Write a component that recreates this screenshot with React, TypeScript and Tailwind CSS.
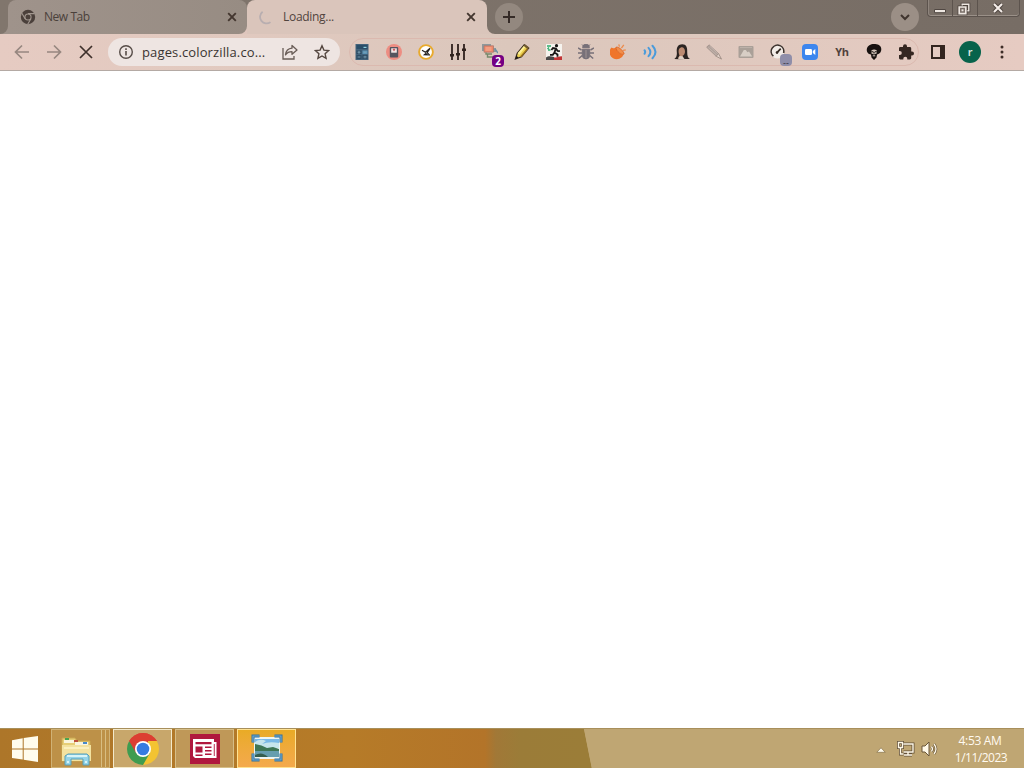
import type { ReactNode } from "react";

const uiFont = "font-['Open_Sans','Noto_Sans',sans-serif]";

type CellProps = { children: ReactNode };

const Cell = ({ children }: CellProps) => (
  <span className="relative flex h-8 w-8 shrink-0 items-center justify-center">
    {children}
  </span>
);

const CloseIcon = () => (
  <svg viewBox="0 0 10 10" className="h-2.5 w-2.5">
    <path d="M1.2 1.2l7.6 7.6M8.8 1.2L1.2 8.8" stroke="#43362f" strokeWidth="1.9" />
  </svg>
);

const Flare = ({ side, color }: { side: "left" | "right"; color: string }) => (
  <svg
    viewBox="0 0 8 8"
    className={`absolute bottom-0 h-2 w-2 ${side === "left" ? "-left-2" : "-right-2"}`}
  >
    <path d={side === "left" ? "M8 0v8H0A8 8 0 0 0 8 0z" : "M0 0v8h8A8 8 0 0 1 0 0z"} fill={color} />
  </svg>
);

const TabStrip = () => (
  <div className="relative flex h-[34px] bg-gradient-to-r from-[#81766d] to-[#776d65] pl-2">
    <div className="relative flex h-[34px] w-[239px] items-center rounded-t-lg bg-gradient-to-r from-[#9f938b] to-[#978c83] pl-3 pr-2.5">
      <Flare side="left" color="#9f938b" />
      <svg viewBox="0 0 16 16" className="h-4 w-4">
        <circle cx="8" cy="8" r="7.2" fill="#4b403b" />
        <circle cx="8" cy="8" r="3.6" fill="#a2978f" />
        <circle cx="8" cy="8" r="2.5" fill="#4b403b" />
        <path d="M8 4.6h6.4M5.1 9.7L1.9 4.2M10.9 9.7l-3.2 5.5" stroke="#a2978f" strokeWidth="1.1" />
      </svg>
      <span className="ml-2 flex-1 text-[12px] tracking-[-0.45px] text-[#4b413b]">New Tab</span>
      <CloseIcon />
    </div>
    <div className="relative flex h-[34px] w-[240px] items-center rounded-t-lg bg-[#dac5bb] pl-3 pr-[11px]">
      <Flare side="left" color="#dfc6bd" />
      <Flare side="right" color="#dac5bb" />
      <svg viewBox="0 0 16 16" className="h-4 w-4">
        <path d="M3.6 2.8A6.3 6.3 0 0 0 11.5 13.1" fill="none" stroke="#b8aeb0" strokeWidth="1.8" />
      </svg>
      <span className="ml-2 flex-1 text-[12px] tracking-[-0.3px] text-[#51443e]">Loading...</span>
      <CloseIcon />
    </div>
    <span className="ml-2 mt-[3px] flex h-7 w-7 items-center justify-center rounded-full bg-[#93887f]">
      <svg viewBox="0 0 14 14" className="h-3.5 w-3.5">
        <path d="M7 1v12M1 7h12" stroke="#352b27" strokeWidth="2" />
      </svg>
    </span>
    <span className="ml-auto mr-[9px] mt-[3px] flex h-7 w-7 items-center justify-center rounded-full bg-[#9b8f86]">
      <svg viewBox="0 0 12 12" className="h-3 w-3">
        <path d="M2 4l4 4 4-4" fill="none" stroke="#40352f" strokeWidth="2" />
      </svg>
    </span>
    <div className="mr-1 flex h-[17px] w-[93px] -ml-px rounded-b border border-t-0 border-[#5c534d] text-[#f5eeea] shadow-[inset_0_-1px_0_#9a9088,inset_1px_0_0_#8f857d]">
      <span className="flex w-[25px] items-center justify-center border-r border-[#5c534d]">
        <svg viewBox="0 0 14 14" className="-ml-px h-3.5 w-3.5">
          <path d="M1.5 8.5h11v3.2h-11z" fill="#eee7e1" stroke="#514843" />
        </svg>
      </span>
      <span className="flex w-[25px] items-center justify-center border-r border-[#5c534d]">
        <svg viewBox="0 0 14 14" className="-ml-0.5 mt-px h-3.5 w-3.5">
          <g fill="none">
            <path d="M5.2 2.2h6.6v6.6H5.2z" stroke="#4b423d" strokeWidth="3" />
            <path d="M5.2 2.2h6.6v6.6H5.2z" stroke="#eee7e1" strokeWidth="1.4" />
            <path d="M2.2 5h6.6v6.6H2.2z" stroke="#4b423d" strokeWidth="3.2" />
            <path d="M2.2 5h6.6v6.6H2.2z" fill="#756b64" stroke="#eee7e1" strokeWidth="1.7" />
            <path d="M4.5 7.3h2v2h-2z" fill="#eee7e1" />
          </g>
        </svg>
      </span>
      <span className="flex flex-1 items-center justify-center">
        <svg viewBox="0 0 12 12" className="-ml-px h-3 w-3">
          <path d="M2 2l8 8M10 2l-8 8" stroke="#514843" strokeWidth="4" />
          <path d="M2 2l8 8M10 2l-8 8" stroke="#f5eeea" strokeWidth="2" />
        </svg>
      </span>
    </div>
  </div>
);

const extensions: { name: string; icon: ReactNode }[] = [
  {
    name: "calculator",
    icon: (
      <>
        <path d="M1.5 0h13v16h-13z" fill="#42627b" />
        <path d="M2.5 1h11v4h-11z" fill="#294d68" />
        <path d="M9.5 3.4h3" stroke="#8fd0df" strokeWidth="1.2" />
        <path d="M2.5 6.5h5V10h-5zM2.5 11h5v4h-5z" fill="#2d4c64" />
        <path d="M8.5 6.5h5V10h-5z" fill="#5b93b4" />
        <path d="M8.5 11h5v4h-5z" fill="#28465e" />
        <path d="M3.5 8.2h3M5 6.8v3M3.6 13h2.8M9.5 8.2h3M9.5 12.3h3M9.5 13.8h3" stroke="#86a9bc" strokeWidth=".8" />
      </>
    ),
  },
  {
    name: "scale",
    icon: (
      <>
        <circle cx="8" cy="8" r="8" fill="#ed8d82" />
        <rect x="3.8" y="3" width="8.4" height="10.4" rx="1" fill="#56545e" />
        <path d="M5.2 4.3h5.6v4.4H5.2z" fill="#f5e8e7" />
        <path d="M8 4.5v2.6M6.8 5.7h2.4" stroke="#c84d50" />
      </>
    ),
  },
  {
    name: "gauge",
    icon: (
      <>
        <circle cx="8" cy="8" r="6.9" fill="#fff" stroke="#e8aa2e" strokeWidth="1.9" />
        <path d="M4 6.3l3.5 2L12 4.3 9.2 8.6l2.6 2.8" fill="none" stroke="#24211e" strokeWidth="1.2" />
        <path d="M4.8 11.2l3-2.4 3.4 2.6z" fill="#24211e" />
      </>
    ),
  },
  {
    name: "sliders",
    icon: (
      <>
        <path d="M2 0v16M8 0v16M14 0v16" stroke="#30221d" strokeWidth="1.8" />
        <path d="M0 10h4v2.4H0zM6 9h4v2.4H6zM12 4.5h4V7h-4z" fill="#30221d" />
      </>
    ),
  },
  {
    name: "screens",
    icon: (
      <>
        <path d="M0 0h9v2H2v5H0zM11 4h3v4h-3z" fill="#8e989b" />
        <path d="M2 1.8h9.5v6.4H2z" fill="#ef8668" stroke="#a9796f" strokeWidth=".8" />
        <path d="M3.5 4h6M3.5 6h6" stroke="#f6b69b" />
        <path d="M4 8.5V10h6M5.5 10v3H12" stroke="#77896a" fill="none" strokeWidth="1.4" />
        <path d="M13 5l3 4" stroke="#6b91a7" strokeWidth="1.4" />
      </>
    ),
  },
  {
    name: "pencil",
    icon: (
      <>
        <path d="M1.4 15l1.8-5.6L10.2.8l4.5 3.4-7.2 8.6z" fill="#ecd151" stroke="#34291f" strokeWidth="1.2" />
        <path d="M3.6 9.2l6.8-8 1.6 1.1-6.6 8.4z" fill="#fff195" />
        <path d="M9.5 1.8L11 .2l4.2 3.4-1.5 1.7z" fill="#715b31" />
        <path d="M1.4 15l1-3.2 2.2 1.7z" fill="#1d1712" />
        <path d="M6.8 12.8l6.7-8" stroke="#9c731f" strokeWidth="1.4" />
      </>
    ),
  },
  {
    name: "runner",
    icon: (
      <>
        <path d="M0 0h16v16H0z" fill="#f5f3ee" />
        <path d="M1 2h4M3 3.5L1.5 5M2 6h2.5" stroke="#2dac6b" strokeWidth="1.4" fill="none" />
        <circle cx="10.5" cy="1.7" r="1.6" fill="#171514" />
        <path d="M5.4 6L7 4l3 .5 1.6 2.4 2.3.2M9.8 4.6L8.5 8.4l3 2v2.4M8.6 8.4l-1.8 2.4H4" fill="none" stroke="#171514" strokeWidth="1.8" />
        <path d="M0 13.5c2-1.6 5-1.4 8-.4V16H0z" fill="#4a4848" />
        <path d="M8 13.2c3 .8 5-1.2 8-.8V16H8z" fill="#c23435" />
      </>
    ),
  },
  {
    name: "bug",
    icon: (
      <g fill="none" stroke="#777078">
        <path d="M0 4l3.5 2M16 4l-3.5 2M0 9h4M16 9h-4M.8 14.5l3.5-3M15.2 14.5l-3.5-3" strokeWidth="1.5" />
        <path d="M4.3 5.2h7.4v6a3.7 3.7 0 0 1-7.4 0z" fill="#777078" />
        <path d="M4.6 3.6a3.4 3.4 0 0 1 6.8 0z" fill="#777078" />
        <path d="M8 6v8" stroke="#a99c9a" strokeWidth=".8" />
        <path d="M4 .5l2 2M12 .5l-2 2" />
      </g>
    ),
  },
  {
    name: "cookie",
    icon: (
      <>
        <path d="M1.6 3.6A7.2 6.8 0 1 0 13.6 10.4C12.9 11 11.4 10.6 9.5 9 7 7 5.8 4.4 6.3 3 4.4 4.8 2.8 4.6 1.6 3.6z" fill="#ef752b" />
        <path d="M6.3 3C5.7 5 7 7.4 9.5 9c1.8 1.5 3.4 1.8 4.6 1C14 7.5 9.5 3 6.3 3z" fill="#f28d49" stroke="#d9601f" strokeWidth=".8" />
        <path d="M9.4 2.6L8.8.4M11.4 4.2L13.8.8M13 6.4l2.8-.5" stroke="#ed8b4c" strokeWidth="1.3" />
      </>
    ),
  },
  {
    name: "speech",
    icon: (
      <g fill="none" stroke="#4a9bdb" strokeWidth="2" strokeLinecap="round">
        <path d="M2.5 6.2q1.4 1.8 0 3.6" />
        <path d="M6.5 3.8q3.8 4.2 0 8.4" />
        <path d="M10.5 1.8q6 6.2 0 12.4" />
      </g>
    ),
  },
  {
    name: "portrait",
    icon: (
      <>
        <path d="M.3 15Q3.4 13 2.8 8C2.3 3 4.5.3 8.2.3c4.2 0 5.3 3.4 5 7.7 0 3.8.6 5.7 2.8 7h-5l-6 .2z" fill="#2b2422" />
        <path d="M5 5C7.6 1.5 11 3.4 11 7.4c0 2-1 3.8-2.6 4.6l.8 2.7-5.4-.5 1.8-2.6C4.6 9.8 4.2 6.8 5 5z" fill="#bc8b72" />
        <path d="M5.6 12l3 .2 2 3H4z" fill="#dfd0c4" />
      </>
    ),
  },
  {
    name: "eyedropper",
    icon: (
      <>
        <path d="M.7 3.3L3 .8l9.5 8.7-2.3 2.8z" fill="#b1a29b" stroke="#9f918a" strokeWidth=".8" />
        <path d="M2.3 3.5l8.6 7.8M3.8 2.2l8 7.4" stroke="#c2b3ab" />
        <path d="M10.2 12.3l2.3-2.8 3 5.6z" fill="#e0d1c8" stroke="#a39289" />
      </>
    ),
  },
  {
    name: "picture",
    icon: (
      <>
        <rect x=".5" y="2" width="15" height="12" rx="1" fill="#aaa098" />
        <path d="M2 12.5L5.8 6h2l1.6 2.2 1.6-.6 3.2 4.9z" fill="#d8cec5" />
        <path d="M2 3.5h12" stroke="#bcb1a9" />
      </>
    ),
  },
  {
    name: "speedometer",
    icon: (
      <>
        <circle cx="7.5" cy="7.5" r="7" fill="#f2ece7" />
        <path d="M3.4 12.2A6.3 6.3 0 1 1 13.6 9" fill="none" stroke="#3c312c" strokeWidth="1.6" />
        <path d="M10.7 4.7L6.8 8.8" stroke="#332821" strokeWidth="1.7" />
        <circle cx="7" cy="8.6" r="1.3" fill="#332821" />
      </>
    ),
  },
  {
    name: "camera",
    icon: (
      <>
        <rect width="16" height="16" rx="4" fill="#3c86ee" />
        <rect x="3" y="5" width="7" height="6" rx="1.2" fill="#fff" />
        <path d="M10.8 7L13.3 5v6l-2.5-2z" fill="#fff" />
      </>
    ),
  },
  { name: "yh", icon: null },
  {
    name: "afro",
    icon: (
      <>
        <path d="M.8 5C1.5 1.5 4.5 0 8 0s7 1.2 7.3 5c.2 3-1.7 5-4.2 5.4H5C2.2 10.3.4 8 .8 5z" fill="#17110f" />
        <path d="M5.4 6.4Q8 4.8 10.8 6.4L10.5 12 8 15.5 5.5 12z" fill="#d3c4b9" />
        <path d="M5.4 7.8h2M8.8 7.8h2M8 8v1.6" stroke="#17110f" strokeWidth="1.1" />
        <path d="M4.8 9.6l1.4.2 1.8.6 1.8-.6 1.4-.2-.7 3.9L8 16l-2.5-2.5z" fill="#17110f" />
        <path d="M6.8 11.8h2.4" stroke="#d6c8be" />
      </>
    ),
  },
  {
    name: "puzzle",
    icon: (
      <path
        d="M14 7.5h-.8V4.4c0-.8-.6-1.4-1.4-1.4H9V2.2a2 2 0 0 0-4 0V3H2.3C1.5 3 1 3.6 1 4.4V7h.8a2 2 0 0 1 0 4H1v3.1c0 .8.6 1.4 1.3 1.4h3v-.8a2 2 0 0 1 4 0v.8h2.5c.8 0 1.4-.6 1.4-1.4v-2.6h.8a2 2 0 0 0 0-4z"
        fill="#342722"
      />
    ),
  },
];

const Toolbar = () => (
  <div className="flex h-[37px] items-center border-b border-[#b4aaa4] bg-gradient-to-r from-[#e6cbc2] via-[#dbc7bc] to-[#e6cbc2] pl-1.5">
    <Cell>
      <svg viewBox="0 0 16 16" className="h-4 w-4">
        <path d="M15 8H2M8 1.5L1.5 8 8 14.5" fill="none" stroke="#978780" strokeWidth="1.7" />
      </svg>
    </Cell>
    <Cell>
      <svg viewBox="0 0 16 16" className="h-4 w-4">
        <path d="M1 8h13M8 1.5L14.5 8 8 14.5" fill="none" stroke="#978780" strokeWidth="1.7" />
      </svg>
    </Cell>
    <Cell>
      <svg viewBox="0 0 14 14" className="h-3.5 w-3.5">
        <path d="M1 1l12 12M13 1L1 13" stroke="#3e302b" strokeWidth="1.7" />
      </svg>
    </Cell>
    <div className="ml-1.5 flex h-7 w-[232px] items-center rounded-full bg-[#eee5e2] pl-2.5">
      <svg viewBox="0 0 16 16" className="h-4 w-4">
        <circle cx="8" cy="8" r="6.3" fill="none" stroke="#574d48" strokeWidth="1.4" />
        <path d="M8 7v4.5M8 4.2v1.7" stroke="#574d48" strokeWidth="1.6" />
      </svg>
      <span className="ml-2 w-[132px] whitespace-nowrap pt-px text-[13px] tracking-[0.13px] text-[#3a3431]">
        pages.colorzilla.co...
      </span>
      <Cell>
        <svg viewBox="0 0 18 18" className="h-[18px] w-[18px]">
          <path d="M2 5v11h11v-3" fill="none" stroke="#685c56" strokeWidth="1.3" />
          <path d="M11 2.5l5 4.5-5 4.3V8.7C7.5 8.7 6 9.7 4.5 11.9 5 7.5 7.3 5.5 11 5.2z" fill="none" stroke="#685c56" strokeWidth="1.3" strokeLinejoin="round" />
        </svg>
      </Cell>
      <Cell>
        <svg viewBox="0 0 16 16" className="h-4 w-4">
          <path d="M8 1.8l1.9 4.3 4.7.5-3.5 3.2 1 4.6L8 12l-4.1 2.4 1-4.6-3.5-3.2 4.7-.5z" fill="none" stroke="#54463f" strokeWidth="1.4" />
        </svg>
      </Cell>
    </div>
    <div className="ml-[9px] flex h-7 w-[570px] items-center rounded-full border border-[#dbb9af]">
      {extensions.map(({ name, icon }) => (
        <Cell key={name}>
          {icon ? (
            <svg viewBox="0 0 16 16" className="-ml-2 h-4 w-4">
              {icon}
            </svg>
          ) : (
            <span className="-ml-2 text-[11px] font-bold leading-4 tracking-[-0.4px] text-[#51413c]">Yh</span>
          )}
          {name === "screens" && (
            <span className="absolute bottom-[1px] right-1.5 flex h-3 w-3 items-center justify-center rounded-sm bg-[#740083] text-[10px] font-bold leading-none text-white">
              2
            </span>
          )}
          {name === "speedometer" && (
            <span className="absolute bottom-[2px] right-1.5 flex h-3 w-3 items-center justify-center rounded-sm bg-[#8f8ea9] pt-1 text-[9px] leading-none text-[#342e39]">
              --
            </span>
          )}
        </Cell>
      ))}
    </div>
    <span className="ml-[3px] flex">
      <Cell>
        <svg viewBox="0 0 14 14" className="h-3.5 w-3.5">
          <path d="M1 1h12v12H1z" fill="none" stroke="#33251f" strokeWidth="2" />
          <path d="M9 1h4v12H9z" fill="#33251f" />
        </svg>
      </Cell>
      <Cell>
        <span className="flex h-[22px] w-[22px] items-center justify-center rounded-full bg-[#07634b] pb-px text-[11px] font-semibold leading-none text-[#e5eee8]">
          r
        </span>
      </Cell>
      <Cell>
        <svg viewBox="0 0 4 14" className="h-3.5 w-1">
          <g fill="#3d2d27">
            <circle cx="2" cy="2" r="1.5" />
            <circle cx="2" cy="7" r="1.5" />
            <circle cx="2" cy="12" r="1.5" />
          </g>
        </svg>
      </Cell>
    </span>
  </div>
);

const taskBase = "flex h-[39px] w-[59px] items-center justify-center border";

const Taskbar = () => (
  <div className="relative flex h-10 items-center border-t border-[#a88f5b] bg-[#bfa673] bg-[linear-gradient(90deg,#ad7629_0,#b67b28_350px,#b37429_485px,#a17837_496px,#9b7c38_520px,#9b7d38_584px,#bfa673_584px)]">
    <svg viewBox="0 0 8 40" className="absolute left-[584px] top-0 h-10 w-2">
      <path d="M0 0l8 40H0z" fill="#9b7d38" />
      <path d="M0 0h8v40z" fill="#bfa673" />
    </svg>
    <span className="flex w-[51px] items-center justify-center">
      <svg viewBox="0 0 28 28" className="-ml-0.5 h-7 w-7">
        <path d="M1 5.2l10.7-2v10.2H1zM12.7 3L27 1v12.4H12.7zM1 14.5h10.7v10.1L1 22.9zM12.7 14.5H27V27l-14.3-2.2z" fill="#fffced" />
      </svg>
    </span>
    <div className="flex h-[39px] w-[59px] border border-[#d0b276] bg-[#bd9148]">
      <span className="flex w-[50px] items-center justify-center border-r border-[#d8bd82]">
        <svg viewBox="0 0 32 30" className="mt-1 h-[30px] w-8">
          <path d="M1 2h13l2 3h13v20H1z" fill="#e6ce77" stroke="#c8a650" />
          <path d="M3 4h10v3H3zM14 6h13v3H14z" fill="#faf5dd" />
          <path d="M4 3h4" stroke="#4aa450" strokeWidth="2" />
          <path d="M13 5h4" stroke="#bd4e3b" strokeWidth="2" />
          <path d="M22 7h4" stroke="#478acb" strokeWidth="2" />
          <path d="M1 9h29v16H1z" fill="#f3e2a0" />
          <path d="M3 11h25v2H3z" fill="#fbf0bf" />
          <path d="M4 29v-9l3-2h19l2 2v9h-6v-6H10v6z" fill="#95d4e7" stroke="#579fb9" />
          <path d="M6 20h20M6 26h2M24 26h2" stroke="#d8f4f7" strokeWidth="2" />
        </svg>
      </span>
      <span className="w-1 border-r border-[#d8bd82]" />
    </div>
    <span className={`${taskBase} ml-[3px] border-[#f3e9ca] bg-[#c8a76b]`}>
      <svg viewBox="0 0 32 32" className="h-8 w-8">
        <path d="M2.15 8A16 16 0 0 1 29.85 8L16 16z" fill="#dc3e32" />
        <path d="M29.85 8A16 16 0 0 1 16 32l-1-12 6-4V8z" fill="#f3c332" />
        <path d="M2.15 8A16 16 0 0 0 16 32l6.9-12H16z" fill="#3f9c50" />
        <path d="M16 8h13.85A16 16 0 0 0 2.15 8l6.9 12z" fill="#dc3e32" />
        <circle cx="16" cy="16" r="8" fill="#fff" />
        <circle cx="16" cy="16" r="6.3" fill="#367be1" />
      </svg>
    </span>
    <span className={`${taskBase} ml-[3px] border-[#d6be88] bg-[#bf9858]`}>
      <svg viewBox="0 0 30 30" className="h-[30px] w-[30px]">
        <path d="M0 0h30v30H0z" fill="#b0183e" />
        <path d="M3 5h21v3h2.5v16H5l-2-2z" fill="#fff" />
        <path d="M5.5 8h16v2.3h-16zM5.5 12.5h7v6h-7zM15 12.5h6.5v1.6H15zM15 16h6.5v1.6H15zM15 19.5h6.5v1.6H15zM5.5 20.5h7v1.4h-7zM23.8 10h.9v12h-.9z" fill="#b0183e" />
      </svg>
    </span>
    <span className={`${taskBase} ml-[3px] border-[#ffe291] bg-gradient-to-b from-[#e9ab25] to-[#f4a94c]`}>
      <svg viewBox="0 0 32 28" className="mb-0.5 h-7 w-8">
        <path d="M3 3h26v22H3z" fill="#edf5f2" />
        <path d="M4 5h24v9H4z" fill="#79b9e7" />
        <path d="M4 8q5-4 11-1l-4 3q7-3 17-1v5H4z" fill="#c6e5ed" />
        <path d="M4 10q7 1 12 4l6-1 6 2v2H4z" fill="#3e7656" />
        <path d="M4 17h24v6H4z" fill="#669eaf" />
        <path d="M4 21q7-4 13 2H4z" fill="#355e4e" />
        <path d="M2 8.5V2h6.5M23.5 2H30v6.5M2 19.5V26h6.5M23.5 26H30v-6.5" fill="none" stroke="#31709f" strokeWidth="3" />
        <path d="M2 8.5V2h6.5M23.5 2H30v6.5M2 19.5V26h6.5M23.5 26H30v-6.5" fill="none" stroke="#6fa9cf" strokeWidth="1.2" />
      </svg>
    </span>
    <div className="ml-auto flex items-center">
      <svg viewBox="0 0 10 6" className="mr-[11px] mt-0.5 h-1.5 w-2.5">
        <path d="M.8 5.3L5 .8l4.2 4.5z" fill="#fffbed" stroke="#786640" strokeWidth=".6" />
      </svg>
      <svg viewBox="0 0 18 16" className="mr-1.5 h-4 w-[18px]">
        <g fill="none">
          <path d="M6.5 3H16v8H6.5M11 11v3M7 14h8M3.5 7v6h3M1.5 1.5h4v5h-4z" stroke="#625038" strokeWidth="3" />
          <path d="M6.5 3H16v8H6.5M11 11v3M7 14h8M3.5 7v6h3M1.5 1.5h4v5h-4z" stroke="#fff9e9" strokeWidth="1.4" />
        </g>
      </svg>
      <svg viewBox="0 0 18 16" className="mr-[13px] h-4 w-[18px]">
        <path d="M1 5h3l4-4v14l-4-4H1z" fill="#fff9e9" stroke="#685538" strokeWidth="1" />
        <path d="M10.5 5.5q2 2.5 0 5M13 3q4 5 0 10" fill="none" stroke="#685538" strokeWidth="2.6" />
        <path d="M10.5 5.5q2 2.5 0 5M13 3q4 5 0 10" fill="none" stroke="#fff9e9" strokeWidth="1.3" />
      </svg>
      <div className="mr-3.5 mt-px w-[58px] whitespace-nowrap text-center text-[12px] leading-[17px] tracking-[-0.5px] text-[#fffaf0]">
        <p className="-ml-0.5 tracking-[-0.35px]">4:53 AM</p>
        <p>1/11/2023</p>
      </div>
    </div>
  </div>
);

export default function App() {
  return (
    <div className={`${uiFont} flex h-screen w-screen flex-col overflow-hidden bg-white`}>
      <TabStrip />
      <Toolbar />
      <main className="flex-1 bg-white" />
      <Taskbar />
    </div>
  );
}
